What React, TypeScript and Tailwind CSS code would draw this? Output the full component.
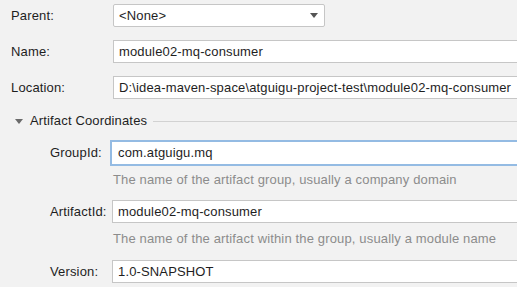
export default function App() {
  return (
    <div
      className="w-[517px] h-[287px] overflow-hidden bg-[#f2f2f2] text-[13px] tracking-[0.15px] text-[#1e1e1e]"
      style={{ fontFamily: '"Liberation Sans", Arial, sans-serif' }}
    >
      {/* Parent */}
      <div className="flex items-center pl-[11px] pt-[4px]">
        <span className="w-[102px] shrink-0">Parent:</span>
        <div className="flex items-center justify-between w-[212px] h-[23px] bg-white border border-[#c6c6c6] rounded-[2px] pl-[5px] pr-[6px]">
          <span>&lt;None&gt;</span>
          <svg width="8" height="5" viewBox="0 0 8 5">
            <path d="M0 0 L8 0 L4 5 Z" fill="#555" />
          </svg>
        </div>
      </div>

      {/* Name */}
      <div className="flex items-center pl-[11px] mt-[13px]">
        <span className="w-[102px] shrink-0">Name:</span>
        <div className="flex items-center w-[500px] shrink-0 h-[23px] bg-white border border-[#c6c6c6] pl-[5px]">
          module02-mq-consumer
        </div>
      </div>

      {/* Location */}
      <div className="flex items-center pl-[11px] mt-[13px]">
        <span className="w-[102px] shrink-0">Location:</span>
        <div className="flex items-center w-[500px] shrink-0 h-[23px] bg-white border border-[#c6c6c6] pl-[5px] whitespace-nowrap">
          D:\idea-maven-space\atguigu-project-test\module02-mq-consumer
        </div>
      </div>

      {/* Artifact Coordinates header */}
      <div className="flex items-center h-[18px] mt-[13px] pl-[15px]">
        <svg width="8" height="5" viewBox="0 0 8 5" className="shrink-0">
          <path d="M0 0 L8 0 L4 5 Z" fill="#6b6b6b" />
        </svg>
        <span className="ml-[7px] whitespace-nowrap">Artifact Coordinates</span>
        <div className="flex-1 h-px bg-[#d2d2d2] ml-[6px]" />
      </div>

      {/* GroupId */}
      <div className="flex items-center pl-[50px] mt-[10px]">
        <span className="w-[60px] shrink-0">GroupId:</span>
        <div className="flex items-center w-[500px] shrink-0 h-[26px] bg-white border-2 border-[#94bbe3] pl-[6px]">
          com.atguigu.mq
        </div>
      </div>
      <div className="pl-[113px] mt-[6px] h-[16px] leading-[16px] text-[#8c8c8c] whitespace-nowrap">
        The name of the artifact group, usually a company domain
      </div>

      {/* ArtifactId */}
      <div className="flex items-center pl-[50px] mt-[12px]">
        <span className="w-[62px] shrink-0">ArtifactId:</span>
        <div className="flex items-center w-[500px] shrink-0 h-[23px] bg-white border border-[#c6c6c6] pl-[5px]">
          module02-mq-consumer
        </div>
      </div>
      <div className="pl-[113px] mt-[8px] h-[16px] leading-[16px] text-[#8c8c8c] whitespace-nowrap">
        The name of the artifact within the group, usually a module name
      </div>

      {/* Version */}
      <div className="flex items-center pl-[50px] mt-[13px]">
        <span className="w-[62px] shrink-0">Version:</span>
        <div className="flex items-center w-[500px] shrink-0 h-[23px] bg-white border border-[#c6c6c6] pl-[5px]">
          1.0-SNAPSHOT
        </div>
      </div>
    </div>
  );
}
